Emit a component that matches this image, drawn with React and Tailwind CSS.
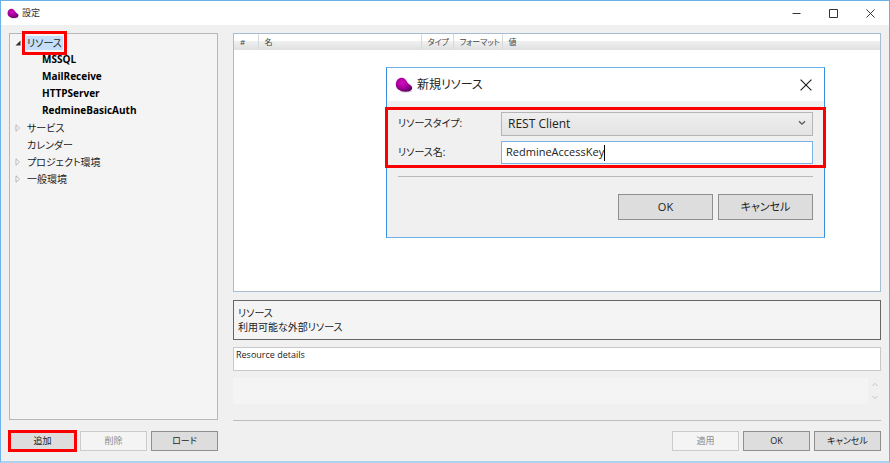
import { useState } from 'react';
import clsx from 'clsx';

const TREE = [
  { label: 'リソース', open: true, children: ['MSSQL', 'MailReceive', 'HTTPServer', 'RedmineBasicAuth'] },
  { label: 'サービス', open: false, children: [] },
  { label: 'カレンダー' },
  { label: 'プロジェクト環境', open: false, children: [] },
  { label: '一般環境', open: false, children: [] },
];

const COLUMNS = [
  { label: '#', width: 'w-6' },
  { label: '名', width: 'w-[163px]' },
  { label: 'タイプ', width: 'w-8' },
  { label: 'フォーマット', width: 'w-[49px]' },
  { label: '値', width: '' },
];

function Logo({ className }) {
  return (
    <svg viewBox="0 0 18 16" className={className} aria-hidden="true">
      <defs>
        <radialGradient id="logo-fill" cx="0.4" cy="0.35" r="0.7">
          <stop offset="0" stopColor="#d30fc0" />
          <stop offset="0.55" stopColor="#a5009b" />
          <stop offset="1" stopColor="#5d0060" />
        </radialGradient>
      </defs>
      <ellipse cx="11" cy="14.4" rx="6" ry="1.2" fill="#d4d0d4" />
      <path
        d="M.8 7.500C.8 3.500 3.500.8 6.800.8c3.200 0 4.200 2.400 5.700 4.600 1.500 2.200 4.700 3 4.700 5.400 0 2.600-2.700 3.900-6.400 3.900C5 14.700.8 12 .8 7.500z"
        fill="url(#logo-fill)"
      />
    </svg>
  );
}

function CloseIcon({ className }) {
  return (
    <svg viewBox="0 0 10 10" className={className} stroke="#222" fill="none" aria-hidden="true">
      <path d="M.5.5l9 9M9.5.5l-9 9" />
    </svg>
  );
}

function Expander({ open }) {
  return (
    <svg viewBox="0 0 8 8" className="size-2 shrink-0" aria-hidden="true">
      {open ? (
        <path d="M6.5 1.5v5h-5z" fill="#333" />
      ) : (
        <path d="M2 .8l3.4 3.2L2 7.2z" fill="#fff" stroke="#a6a6a6" strokeWidth="0.8" />
      )}
    </svg>
  );
}

// Red frame drawn around the part being explained
function Highlight({ className }) {
  return <span className={clsx('pointer-events-none absolute border-[3px] border-[#fb0000]', className)} />;
}

function PushButton({ children, disabled, large, highlighted, onClick }) {
  return (
    <button
      type="button"
      disabled={disabled}
      onClick={onClick}
      className={clsx(
        'relative flex items-center justify-center border',
        large ? 'h-[26px] w-[95px] text-[11px]' : 'h-5 w-[67px] text-[9px]',
        disabled ? 'border-[#c9cccc] bg-[#f4f4f4] text-[#8d8d8d]' : 'border-[#8f8f8f] bg-[#dddddd] text-[#222]'
      )}
    >
      {children}
      {highlighted && <Highlight className="-inset-[2px]" />}
    </button>
  );
}

function TitleBar() {
  return (
    <header className="flex h-6 items-center bg-white pl-[6px] pr-[14px]">
      <Logo className="h-[11px] w-3" />
      <h1 className="ml-[3px] flex-1 text-[9px] text-[#333]">設定</h1>
      <div className="flex items-center gap-7">
        <button type="button" aria-label="Minimize">
          <svg viewBox="0 0 9 9" className="size-[9px]" stroke="#333" aria-hidden="true">
            <path d="M.5 4.5h8" />
          </svg>
        </button>
        <button type="button" aria-label="Maximize">
          <svg viewBox="0 0 9 9" className="size-[9px]" stroke="#333" fill="none" aria-hidden="true">
            <path d="M.5.5h8v8h-8z" />
          </svg>
        </button>
        <button type="button" aria-label="Close">
          <CloseIcon className="size-[9px]" />
        </button>
      </div>
    </header>
  );
}

function ResourceTree() {
  const [selected, setSelected] = useState('リソース');

  return (
    <ul className="flex-1 border border-[#b4b8bc] bg-[#f4f4f4] pl-1 text-[10px] leading-[17px] text-[#222]">
      {TREE.map((node) => (
        <li key={node.label}>
          <div className="flex h-[17px] items-center gap-1">
            {node.children ? <Expander open={node.open} /> : <span className="w-2" />}
            <button
              type="button"
              onClick={() => setSelected(node.label)}
              className={clsx('relative px-px leading-[14px]', selected === node.label && 'bg-[#c5dffa]')}
            >
              {node.label}
              {node.open && <Highlight className="-inset-x-1 -inset-y-[5px]" />}
            </button>
          </div>
          {node.open && (
            <ul>
              {node.children.map((name) => (
                <li key={name} className="pl-7 font-bold text-black">{name}</li>
              ))}
            </ul>
          )}
        </li>
      ))}
    </ul>
  );
}

function NewResourceDialog({ onClose }) {
  const [name, setName] = useState('RedmineAccessKey');

  return (
    <div
      role="dialog"
      aria-label="新規リソース"
      className="absolute right-14 top-[34px] w-[439px] border border-x-[#3a8fdc] border-y-[#6cb1e8] bg-[#f0f0f0] text-xs text-[#222]"
    >
      <div className="flex h-[33px] items-center bg-white pl-2 pr-3">
        <Logo className="h-4 w-[18px]" />
        <h2 className="ml-1 flex-1">新規リソース</h2>
        <button type="button" aria-label="Close" onClick={onClose}>
          <CloseIcon className="size-3" />
        </button>
      </div>

      <div className="px-[11px] pb-[17px] pt-[11px]">
        <div className="relative grid grid-cols-[103px_1fr] items-center gap-y-[5px]">
          <label htmlFor="resource-type" className="text-[10px]">リソースタイプ:</label>
          <div className="relative">
            <select
              id="resource-type"
              className="block h-6 w-full appearance-none border border-[#b5b5b5] bg-linear-to-b from-[#efefef] to-[#e3e3e3] px-[6px] text-xs outline-none"
            >
              <option>REST Client</option>
            </select>
            <svg viewBox="0 0 8 6" className="pointer-events-none absolute right-[7px] top-2 h-[6px] w-2" fill="none" stroke="#555" strokeWidth="1.3" aria-hidden="true">
              <path d="M1 1.2l3 3 3-3" />
            </svg>
          </div>

          <label htmlFor="resource-name" className="text-[10px]">リソース名:</label>
          <div className="flex h-[23px] items-center border border-[#7ab3ea] bg-white pl-1">
            <input
              id="resource-name"
              type="text"
              value={name}
              onChange={(e) => setName(e.target.value)}
              className="field-sizing-content text-[11px] caret-transparent outline-none"
            />
            <span className="h-4 w-px bg-black" />
          </div>
          <Highlight className="-inset-x-[13px] -bottom-1 -top-[5px]" />
        </div>

        <hr className="mt-3 border-t border-[#b9b9b9]" />

        <div className="mt-[17px] flex justify-end gap-[5px]">
          <PushButton large onClick={onClose}>OK</PushButton>
          <PushButton large onClick={onClose}>キャンセル</PushButton>
        </div>
      </div>
    </div>
  );
}

function ResourceTable() {
  return (
    <div className="flex-1 border border-[#a9bdd0] bg-white">
      <table className="w-full table-fixed border-collapse text-[8px] text-[#444]">
        <thead>
          <tr className="h-4 bg-linear-to-b from-white from-40% via-[#f0f0f0] via-45% to-[#dfe0e1]">
            {COLUMNS.map((col) => (
              <th
                key={col.label}
                className={clsx('whitespace-nowrap border-r border-[#d8dade] pl-[6px] text-left font-normal leading-4 last:border-r-0', col.width)}
              >
                {col.label}
              </th>
            ))}
          </tr>
        </thead>
        <tbody />
      </table>
    </div>
  );
}

export default function App() {
  const [dialogOpen, setDialogOpen] = useState(true);

  return (
    <div
      lang="ja"
      className="flex min-h-screen flex-col border border-b-2 border-[#6cb1e8] border-b-[#add3ef] bg-[#f0f0f0] font-['Open_Sans','Noto_Sans_CJK_JP',sans-serif] [font-feature-settings:'palt']"
    >
      <TitleBar />

      <main className="flex flex-1 gap-[15px] px-2 pb-[10px] pt-2">
        <section className="flex w-[209px] shrink-0 flex-col">
          <ResourceTree />
          <div className="mt-[11px] flex justify-between">
            <PushButton highlighted onClick={() => setDialogOpen(true)}>追加</PushButton>
            <PushButton disabled>削除</PushButton>
            <PushButton>ロード</PushButton>
          </div>
        </section>

        <section className="relative flex min-w-0 flex-1 flex-col">
          <ResourceTable />

          <div className="mt-2 border border-[#666] bg-[#f4f4f4] px-1 py-[5px] text-[10px] leading-[14px] text-[#222]">
            <p>リソース</p>
            <p>利用可能な外部リソース</p>
          </div>

          <textarea
            readOnly
            aria-label="Resource details"
            value="Resource details"
            className="mt-[7px] block h-6 resize-none overflow-hidden border border-[#c9c9c9] bg-white px-[2px] text-[9px] leading-[14px] text-[#222] outline-none"
          />

          <div className="mt-[7px] flex h-[26px] bg-[#f4f4f4]">
            <div className="ml-auto flex w-[13px] flex-col items-center justify-between bg-[#f0f0f0] py-1">
              <svg viewBox="0 0 6 5" className="h-[5px] w-[6px]" fill="none" stroke="#c4c4c4" aria-hidden="true">
                <path d="M.5 4L3 1.3 5.500 4" />
              </svg>
              <svg viewBox="0 0 6 5" className="h-[5px] w-[6px]" fill="none" stroke="#c4c4c4" aria-hidden="true">
                <path d="M.5 1L3 3.700 5.500 1" />
              </svg>
            </div>
          </div>

          <hr className="mt-4 border-t border-[#bdbdbd]" />

          <div className="mt-[10px] flex justify-end gap-1">
            <PushButton disabled>適用</PushButton>
            <PushButton>OK</PushButton>
            <PushButton>キャンセル</PushButton>
          </div>

          {dialogOpen && <NewResourceDialog onClose={() => setDialogOpen(false)} />}
        </section>
      </main>
    </div>
  );
}
